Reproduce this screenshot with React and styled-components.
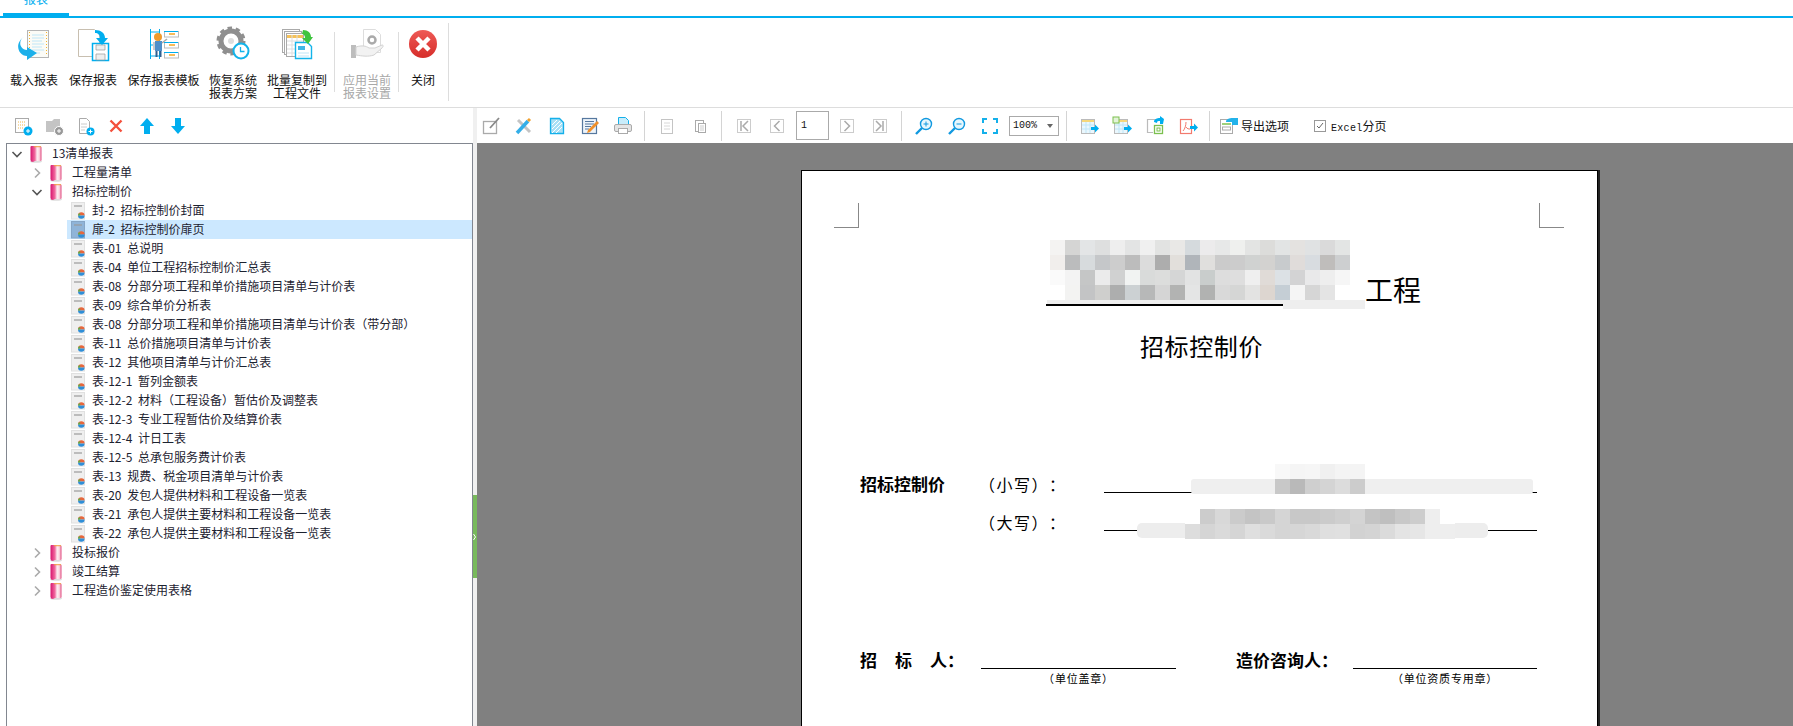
import React from "react";
import styled, { createGlobalStyle } from "styled-components";

const CJK = `"Noto Sans CJK SC", "Noto Sans", sans-serif`;
const BLUE = "#00aeef";

const GlobalStyle = createGlobalStyle`
  html, body { margin: 0; padding: 0; height: 100%; overflow: hidden; background: #fff; }
  #root { height: 100%; }
`;

const Shell = styled.div`
  display: flex;
  flex-direction: column;
  height: 726px;
  overflow: hidden;
  font-family: ${CJK};
  font-size: 12px;
  color: #111;
  background: #fff;
`;

const TabStrip = styled.div`
  height: 16px;
  border-bottom: 2px solid ${BLUE};
  padding-left: 3px;
  overflow: hidden;
`;

const Tab = styled.div`
  width: 66px;
  height: 13px;
  border-bottom: 3px solid ${BLUE};
  text-align: center;
  color: ${BLUE};
  line-height: 12px;
  overflow: hidden;
  span { display: block; margin-top: -7px; }
`;

const Ribbon = styled.div`
  display: flex;
  height: 89px;
  padding-left: 10px;
  border-bottom: 1px solid #ddd;
  box-sizing: content-box;
`;

const RibbonButton = styled.div`
  display: flex;
  flex-direction: column;
  align-items: center;
  width: ${(p) => p.$w}px;
  margin-right: ${(p) => p.$gap ?? 11}px;
  padding-top: 8px;
  color: ${(p) => (p.$disabled ? "#a8a8a8" : "#111")};
`;

const RibbonLabel = styled.div`
  margin-top: 11px;
  line-height: 13px;
  text-align: center;
  white-space: nowrap;
`;

const RibbonSep = styled.div`
  width: 1px;
  height: ${(p) => p.$h}px;
  margin: ${(p) => p.$top}px ${(p) => p.$right}px 0 0;
  background: #ddd;
`;

const Body = styled.div`
  flex: 1;
  display: flex;
  min-height: 0;
`;

const LeftPanel = styled.div`
  width: 473px;
  display: flex;
  flex-direction: column;
`;

const MiniBar = styled.div`
  display: flex;
  align-items: center;
  gap: 11px;
  height: 35px;
  padding-left: 13px;
`;

const TreeBox = styled.div`
  flex: 1;
  margin-left: 6px;
  border: 1px solid #828790;
  border-bottom: 0;
  color: #1c2230;
`;

const Row = styled.div`
  display: flex;
  align-items: center;
  height: 19px;
  margin-left: ${(p) => (p.$leaf ? 60 : 0)}px;
  padding-left: ${(p) => (p.$leaf ? 4 : 4 + p.$level * 20)}px;
  background: ${(p) => (p.$selected ? "#cce8ff" : "transparent")};
  white-space: pre;
  line-height: 19px;
`;

const RowLabel = styled.span`
  margin-top: -2px;
  word-spacing: 3px;
`;

const Twisty = styled.svg`
  width: 12px;
  height: 12px;
  margin-right: 6px;
  flex: none;
`;

const NodeIcon = styled.svg`
  flex: none;
  width: 14px;
  height: 18px;
  margin-right: ${(p) => p.$gap}px;
`;

const Splitter = styled.div`
  width: 4px;
  flex: none;
  background: #f0f0f0;
`;

const SplitHandle = styled.div`
  display: flex;
  align-items: center;
  justify-content: center;
  margin-top: 387px;
  height: 83px;
  background: #78b95c;
`;

const RightPanel = styled.div`
  flex: 1;
  display: flex;
  flex-direction: column;
  min-width: 0;
`;

const ToolBar = styled.div`
  display: flex;
  align-items: center;
  height: 35px;
  padding-left: 4px;
`;

const ToolGroup = styled.div`
  display: flex;
  align-items: center;
  gap: 13px;
`;

const ToolIcon = styled.svg`
  width: 20px;
  height: 20px;
  flex: none;
`;

const ToolSep = styled.div`
  width: 1px;
  height: 30px;
  margin: 0 ${(p) => p.$right ?? 11}px 0 ${(p) => p.$left ?? 11}px;
  background: #d4d4d4;
`;

const PageField = styled.div`
  width: 33px;
  height: 29px;
  margin: 0 8px 0 9px;
  padding-left: 4px;
  box-sizing: border-box;
  border: 1px solid #aaa;
  font: 10px/27px "Liberation Mono", monospace;
`;

const ZoomSelect = styled.div`
  display: flex;
  align-items: center;
  justify-content: space-between;
  width: 50px;
  height: 20px;
  margin-left: 9px;
  padding: 0 5px 0 3px;
  box-sizing: border-box;
  border: 1px solid #aaa;
  font: 10px/18px "Liberation Mono", monospace;
  &::after {
    content: "";
    border: 3px solid transparent;
    border-top: 4px solid #666;
    border-bottom: 0;
  }
`;

const ExportOption = styled.div`
  display: flex;
  align-items: center;
  gap: 3px;
  margin-right: 25px;
`;

const CheckOption = styled.div`
  display: flex;
  align-items: center;
  gap: 5px;
  span { font: 10px "Liberation Mono", monospace; letter-spacing: .3px; }
`;

const CheckBox = styled.div`
  display: flex;
  align-items: center;
  justify-content: center;
  width: 10px;
  height: 10px;
  border: 1px solid #999;
`;

const Viewer = styled.div`
  flex: 1;
  min-height: 0;
  padding: 27px 0 0 324px;
  background: #808080;
  overflow: hidden;
`;

const Page = styled.div`
  width: 795px;
  height: 700px;
  background: #fff;
  border: 1px solid #000;
  border-bottom: 0;
  box-shadow: 2px 0 0 #222;
  color: #000;
  text-spacing-trim: space-all;
`;

const CropMarks = styled.div`
  display: flex;
  justify-content: space-between;
  margin: 32px 33px 0 32px;
`;

const CropMark = styled.div`
  width: 24px;
  height: 24px;
  border-bottom: 1px solid #888;
  ${(p) => (p.$right ? "border-left: 1px solid #888;" : "border-right: 1px solid #888;")}
`;

const TitleRow = styled.div`
  position: relative;
  display: flex;
  align-items: flex-end;
  height: 66px;
  margin: 12px 0 0 244px;
`;

const TitleLine = styled.div`
  width: 237px;
  height: 2px;
  background: #000;
`;

const TitleText = styled.div`
  margin: 0 0 -1px 82px;
  font-size: 28px;
  line-height: 36px;
`;

const Heading = styled.div`
  margin: 23px 0 0 338px;
  font-size: 24px;
  letter-spacing: .6px;
  line-height: 34px;
`;

const FormRow = styled.div`
  display: flex;
  align-items: flex-start;
  height: 38px;
  margin-left: 58px;
  margin-top: ${(p) => p.$top ?? 0}px;
  font-size: 16px;
  line-height: 38px;
`;

const FieldLabel = styled.div`
  width: ${(p) => p.$w}px;
  flex: none;
  font-weight: ${(p) => (p.$bold ? 700 : 400)};
  font-size: ${(p) => (p.$bold ? 17 : 16)}px;
  letter-spacing: ${(p) => (p.$bold ? 0 : 1.5)}px;
  white-space: nowrap;
  span { letter-spacing: 18px; }
`;

const Blank = styled.div`
  position: relative;
  width: ${(p) => p.$w}px;
  flex: none;
  height: 27px;
  border-bottom: 1px solid #000;
  margin-right: ${(p) => p.$gap ?? 0}px;
`;

const Caption = styled.div`
  position: absolute;
  top: 28px;
  left: 0;
  right: 0;
  text-align: center;
  font-size: 11px;
  letter-spacing: .8px;
  line-height: 18px;
`;

const Mosaic = styled.div`
  position: absolute;
  left: ${(p) => p.$x}px;
  top: ${(p) => p.$y}px;
  display: grid;
  grid-template-columns: repeat(${(p) => p.$cols}, 15px);
  grid-auto-rows: 15px;
`;

const Smudge = styled.div`
  position: absolute;
  left: ${(p) => p.$x}px;
  top: ${(p) => p.$y}px;
  width: ${(p) => p.$w}px;
  height: ${(p) => p.$h}px;
  background: ${(p) => p.$c ?? "#eeeeee"};
  border-radius: ${(p) => p.$r ?? 0}px;
`;

const Cell = styled.div`
  background: #${(p) => p.$c};
`;

const titleCells = (
  "f4f3f2 d5d5d4 e3e5e6 dedfdf eeeeee e3e4e4 f0f0f0 e2e3e2 e9e8e6 d5dadd ecebec e7e8e8 eff0ee e3e4e3 dcdcda e2e4e4 e4e2e0 e0e2e3 dadada e3e5e4 " +
  "f1eeec bbbcbd d7dbdd c5c7c9 cdcdcd bcbcbc dcdcdc adadad e2dfdb b0b5ba e0dfdd cbcbcb cccccc d0d2d1 d3d2d0 c8cbcd e0dcda d8dce0 bfbdbb cdcfd0 " +
  "fafafa f3f3f3 c5c6c6 ebebeb d0d1d1 f1f3f2 d9dbda dcdddc d5d6d6 e2e3e3 c9cdcc dddddd dedede efefef e0dbd7 dce1e5 d3d3d4 e9e9ea eeeeee f6f6f6 " +
  "ffffff f3f3f2 c3c4c5 cfcfcd adaeae ccd1d3 b7b8b8 d5d5d5 b2b3b2 e4e5e5 b1b2b1 d9d9d9 d5d6d5 e3e3e2 ddd6d0 c5ced5 f5f5f5 d6d6d6 e4e4e4 ffffff"
).split(" ");
const smallCells = "f8f8f8 f5f5f5 f6f6f6 f0f0f0 f4f4f4 f4f4f4 c8c8c8 b9b9b9 cfcfcf d4d4d4 dcdcdc cccccc".split(" ");
const bigCells = (
  "ffffff cccccc d8d8d8 cbcbcb c4c4c4 c9c9c9 d5d5d5 c8c8c8 c8c8c8 cbcbcb cfcfcf d4d4d4 c4c4c4 bfbfbf c8c8c8 cdcdcd eeeeee ffffff " +
  "dddddd d5d5d5 dadada d5d5d5 dfdfdf dadada d5d5d5 d6d6d6 d9d9d9 dfdfdf e0e0e0 d2d2d2 d4d4d4 dbdbdb e4e4e4 e6e6e6 eeeeee eeeeee"
).split(" ");

const Pixels = ({ cells, cols, x, y }) => (
  <Mosaic $cols={cols} $x={x} $y={y}>
    {cells.map((c, i) => (
      <Cell key={i} $c={c} />
    ))}
  </Mosaic>
);

// ribbon icons, 36 x 36
const RibbonIcon = ({ children }) => (
  <svg width="36" height="36" viewBox="0 0 36 36" style={{ flex: "none" }}>
    {children}
  </svg>
);

const LoadIcon = () => (
  <RibbonIcon>
    <rect x="11.5" y="4.5" width="21" height="27" fill="#fbfbf6" stroke="#b5b5b5" />
    <path d="M13.5 6v24M30.5 6v24" stroke="#f5b32c" strokeDasharray="1 2" />
    <path d="M16 9h12M16 12h12M16 15h10M16 18h12M16 21h10M16 24h12M16 27h8" stroke="#bfe6f7" />
    <path d="M8 11C3 13 2 23 11 24v-3l10 6-10 7v-4C2 30-2 17 8 11z" fill="#1cb0ea" />
  </RibbonIcon>
);
const SaveIcon = () => (
  <RibbonIcon>
    <path d="M3.5 3.5h16l5 5v22h-21z" fill="#fff" stroke="#c8bfb0" />
    <rect x="17.5" y="17.5" width="16" height="17" fill="#fff" stroke={BLUE} strokeWidth="1.5" />
    <path d="M21 19h9v5h-9zM21 28h9v6h-9z" fill="#eee" stroke="#999" strokeWidth=".7" />
    <path d="M20 4c6 0 10 3 10 8h3l-6 7-6-7h4c0-3-2-5-5-5z" fill={BLUE} />
  </RibbonIcon>
);
const TemplateIcon = () => (
  <RibbonIcon>
    <path d="M4.5 3v30M13.5 3v30M4 6h10M4 19h10M4 30h10" stroke={BLUE} />
    <g fill="#fff" stroke="#bbb">
      <rect x="18.5" y="5.5" width="14" height="5.5" />
      <rect x="18.5" y="16.5" width="14" height="5.5" />
      <rect x="18.5" y="26.5" width="14" height="5.5" />
    </g>
    <path d="M18 5.5h14M18 16.5h14M18 26.5h14" stroke={BLUE} />
    <path d="M23 8h6M23 19h6M23 29h6" stroke="#f5a623" strokeWidth="1.4" />
    <circle cx="12" cy="11" r="4" fill="#f09a2c" />
    <rect x="9" y="15" width="7" height="10" fill="#4f8fc9" />
    <path d="M16 17l5-4" stroke="#aaa" strokeWidth="1.6" />
    <rect x="7" y="16" width="2" height="8" fill="#ccc" />
    <path d="M10.5 25v6M14.5 25v6" stroke="#2f5f8f" strokeWidth="2" />
  </RibbonIcon>
);
const RestoreIcon = () => (
  <RibbonIcon>
    <circle cx="16" cy="15" r="10" fill="none" stroke="#8f8f8f" strokeWidth="5" />
    <circle cx="16" cy="15" r="13" fill="none" stroke="#8f8f8f" strokeWidth="3" strokeDasharray="4.5 3.7" />
    <circle cx="16" cy="15" r="3" fill="#ddd" />
    <circle cx="26" cy="25" r="7.5" fill="#fff" stroke="#14b4ea" strokeWidth="2" />
    <path d="M25.5 21v4.5h4" fill="none" stroke="#14b4ea" strokeWidth="1.3" />
  </RibbonIcon>
);
const BatchIcon = () => (
  <RibbonIcon>
    <rect x="3.5" y="3.5" width="17" height="23" fill="#fff" stroke="#aaa" />
    <rect x="5.5" y="5.5" width="17" height="23" fill="#fff" stroke="#aaa" />
    <rect x="7.5" y="7.5" width="17" height="23" fill="#fff" stroke="#aaa" />
    <path d="M8 9h16v3H8z" fill="#f5c25a" />
    <path d="M8 15h16M8 19h16M8 23h16M8 27h16M13 9v21M18 9v21" stroke="#ddd" />
    <path d="M16.5 16.5h12l4 4v12h-16z" fill="#fff" stroke="#14b4ea" strokeWidth="1.4" />
    <path d="M19 20h7v4h-7z" fill="#3fb6e6" />
    <path d="M19 27h11M19 30h11" stroke="#bfe6f7" />
    <path d="M24 4c5 0 8 3 8 7h2l-5 7-6-6h3c0-2-1-4-3-4z" fill="#3ec43e" />
  </RibbonIcon>
);
const ApplyIcon = () => (
  <RibbonIcon>
    <path d="M14.5 3.5h12l5 5v18h-17z" fill="#fff" stroke="#ddd" />
    <circle cx="23" cy="14" r="3.5" fill="none" stroke="#aaa" strokeWidth="2.5" />
    <rect x="2" y="19" width="5" height="13" fill="#bdbdbd" />
    <path d="M7 21c6-2 10-1 13 1h6l7-3c2 0 1 2 0 3l-8 7c-6 2-12 1-18 0z" fill="#f2f2f2" stroke="#d2d2d2" />
  </RibbonIcon>
);
const CloseIcon = () => (
  <RibbonIcon>
    <defs>
      <linearGradient id="closeRed" x1="0" y1="0" x2="0" y2="1">
        <stop offset="0" stopColor="#ee5a56" />
        <stop offset="1" stopColor="#d62d2a" />
      </linearGradient>
    </defs>
    <circle cx="18" cy="18" r="14" fill="url(#closeRed)" />
    <path d="M12 12l12 12M24 12L12 24" stroke="#fff" strokeWidth="4.5" />
  </RibbonIcon>
);

const Tool = ({ children }) => <ToolIcon viewBox="0 0 20 20">{children}</ToolIcon>;

const NavButton = ({ d }) => (
  <Tool>
    <rect x="3.5" y="3.5" width="13" height="13" fill="#fff" stroke="#ccc" />
    <path d={d} fill="none" stroke="#aaa" strokeWidth="1.5" />
  </Tool>
);

const Magnifier = ({ plus }) => (
  <Tool>
    <circle cx="12" cy="8" r="5.5" fill="#e8f7fd" stroke="#1199e0" strokeWidth="1.4" />
    <path d="M8 12l-6 6" stroke="#1199e0" strokeWidth="2.4" />
    <path d={plus ? "M9.5 8h5M12 5.5v5" : "M9.5 8h5"} stroke="#1199e0" />
  </Tool>
);

const TableArrow = ({ badge }) => (
  <Tool>
    <rect x="2.5" y="3.5" width="13" height="14" fill="#eaf7fd" stroke="#bbb" />
    <path d="M3 4h12v2H3z" fill="#f5d77a" />
    <path d="M3 9h12M3 13h12M7 6v11M11 6v11" stroke="#bfe6f7" />
    {badge && <rect x="1" y="1" width="6" height="6" fill="#e2f3d8" stroke="#7cc04f" />}
    <path d="M12 11h4V8.5l4 4-4 4V14h-4z" fill={BLUE} />
  </Tool>
);

const folders = [
  { label: "工程量清单" },
  { label: "招标控制价", open: true },
];

const leaves = [
  "封-2 招标控制价封面",
  "扉-2 招标控制价扉页",
  "表-01 总说明",
  "表-04 单位工程招标控制价汇总表",
  "表-08 分部分项工程和单价措施项目清单与计价表",
  "表-09 综合单价分析表",
  "表-08 分部分项工程和单价措施项目清单与计价表（带分部）",
  "表-11 总价措施项目清单与计价表",
  "表-12 其他项目清单与计价汇总表",
  "表-12-1 暂列金额表",
  "表-12-2 材料（工程设备）暂估价及调整表",
  "表-12-3 专业工程暂估价及结算价表",
  "表-12-4 计日工表",
  "表-12-5 总承包服务费计价表",
  "表-13 规费、税金项目清单与计价表",
  "表-20 发包人提供材料和工程设备一览表",
  "表-21 承包人提供主要材料和工程设备一览表",
  "表-22 承包人提供主要材料和工程设备一览表",
];

const Chevron = ({ open }) => (
  <Twisty viewBox="0 0 12 12">
    {open ? (
      <path d="M1.5 4L6 8.5 10.500 4" fill="none" stroke="#555" strokeWidth="1.6" />
    ) : (
      <path d="M4 1.500L8.500 6 4 10.500" fill="none" stroke="#aaa" strokeWidth="1.6" />
    )}
  </Twisty>
);

const BookIcon = () => (
  <NodeIcon viewBox="0 0 14 18" $gap={9}>
    <defs>
      <linearGradient id="bookFace" x1="0" y1="0" x2="1" y2="0">
        <stop offset="0" stopColor="#d8146e" />
        <stop offset=".4" stopColor="#f06a9e" />
        <stop offset=".6" stopColor="#fdeef2" />
        <stop offset=".8" stopColor="#fbd5df" />
        <stop offset="1" stopColor="#e04a80" />
      </linearGradient>
    </defs>
    <ellipse cx="7" cy="16.500" rx="6" ry="1.300" fill="#ddd" />
    <path d="M1.500 2q0-1 1-1h8.500q1.500 0 1.500 1.500V15q0 1-1 1H6l-2 1q-2.500 0-2.500-2z" fill="url(#bookFace)" />
    <path d="M5 1.200h7v1H5z" fill="#f0a040" />
  </NodeIcon>
);

const SheetIcon = ({ selected }) => (
  <NodeIcon viewBox="0 0 14 18" $gap={7}>
    <rect x=".5" y=".5" width="13" height="16.500" fill={selected ? "#8fb4d8" : "#efefef"} stroke={selected ? "#86a6c6" : "#e0e0e0"} />
    <path d="M3 4h8" stroke="#999" strokeWidth="1.200" />
    <path d="M7 13.500a3.300 3.300 0 0 1 6.600 0z" fill="#e8663c" />
    <path d="M7 13.500h6.600a3.300 3.300 0 0 1-6.600 0z" fill="#2f8fd8" />
    <path d="M7 13.500a2.200 2.200 0 0 1 2.200-2.200v2.200z" fill="#58b24c" />
  </NodeIcon>
);

const Folder = ({ level, label, open }) => (
  <Row $level={level}>
    <Chevron open={open} />
    <BookIcon />
    <RowLabel>{label}</RowLabel>
  </Row>
);

const App = () => (
  <Shell>
    <GlobalStyle />
    <TabStrip>
      <Tab>
        <span>报表</span>
      </Tab>
    </TabStrip>

    <Ribbon>
      <RibbonButton $w={48} $gap={12}>
        <LoadIcon />
        <RibbonLabel>载入报表</RibbonLabel>
      </RibbonButton>
      <RibbonButton $w={46} $gap={12}>
        <SaveIcon />
        <RibbonLabel>保存报表</RibbonLabel>
      </RibbonButton>
      <RibbonButton $w={71} $gap={10}>
        <TemplateIcon />
        <RibbonLabel>保存报表模板</RibbonLabel>
      </RibbonButton>
      <RibbonButton $w={48} $gap={10}>
        <RestoreIcon />
        <RibbonLabel>
          恢复系统
          <br />
          报表方案
        </RibbonLabel>
      </RibbonButton>
      <RibbonButton $w={60} $gap={7}>
        <BatchIcon />
        <RibbonLabel>
          批量复制到
          <br />
          工程文件
        </RibbonLabel>
      </RibbonButton>
      <RibbonSep $top={14} $h={60} $right={8} />
      <RibbonButton $w={48} $gap={7} $disabled>
        <ApplyIcon />
        <RibbonLabel>
          应用当前
          <br />
          报表设置
        </RibbonLabel>
      </RibbonButton>
      <RibbonSep $top={14} $h={60} $right={12} />
      <RibbonButton $w={24} $gap={13}>
        <CloseIcon />
        <RibbonLabel>关闭</RibbonLabel>
      </RibbonButton>
      <RibbonSep $top={5} $h={78} $right={0} />
    </Ribbon>

    <Body>
      <LeftPanel>
        <MiniBar>
          <Tool>
            <rect x="2.500" y="2.500" width="13" height="14" fill="#fff" stroke="#aaa" />
            <path d="M5 6h8M5 9h8M5 12h6" stroke="#f2b84a" strokeDasharray="1 1" />
            <circle cx="15" cy="15" r="4.500" fill={BLUE} />
            <path d="M13 15h4M15 13v4" stroke="#fff" />
          </Tool>
          <Tool>
            <path d="M2 5h6l2-2h6v13H2z" fill="#c4c4c4" />
            <circle cx="15" cy="15" r="4.500" fill="#999" stroke="#fff" />
            <path d="M13 15h4M15 13v4" stroke="#fff" />
          </Tool>
          <Tool>
            <path d="M4.500 2.500h7l3 3v12h-10z" fill="#fff" stroke="#aaa" />
            <path d="M6 8h6M6 11h6M6 14h4" stroke="#ccc" />
            <circle cx="15.500" cy="15.500" r="4" fill={BLUE} />
            <path d="M13.500 15.500h4M15.500 13.500v4" stroke="#fff" />
          </Tool>
          <Tool>
            <path d="M4.500 4.500l11 11M15.500 4.500l-11 11" stroke="#f4503c" strokeWidth="2.400" />
          </Tool>
          <Tool>
            <path d="M10 2l7 8h-4v8H7v-8H3z" fill={BLUE} />
          </Tool>
          <Tool>
            <path d="M10 18l7-8h-4V2H7v8H3z" fill={BLUE} />
          </Tool>
        </MiniBar>
        <TreeBox>
          <Folder level={0} label="13清单报表" open />
          {folders.map((f) => (
            <Folder key={f.label} level={1} label={f.label} open={f.open} />
          ))}
          {leaves.map((text, i) => (
            <Row key={i} $leaf $selected={i === 1}>
              <SheetIcon selected={i === 1} />
              <RowLabel>{text}</RowLabel>
            </Row>
          ))}
          <Folder level={1} label="投标报价" />
          <Folder level={1} label="竣工结算" />
          <Folder level={1} label="工程造价鉴定使用表格" />
        </TreeBox>
      </LeftPanel>

      <Splitter>
        <SplitHandle>
          <svg width="4" height="8" viewBox="0 0 4 8">
            <path d="M.5 1l2 3-2 3" fill="none" stroke="#fff" />
          </svg>
        </SplitHandle>
      </Splitter>

      <RightPanel>
        <ToolBar>
          <ToolGroup>
            <Tool>
              <rect x="2.500" y="5.500" width="13" height="12" fill="#fff" stroke="#aaa" strokeWidth="1.300" />
              <path d="M9 12l9-10" stroke="#888" strokeWidth="1.800" />
            </Tool>
            <Tool>
              <path d="M4 4l12 12" stroke="#c4c4c4" strokeWidth="3" />
              <path d="M3 17l11-12" stroke="#33aee8" strokeWidth="3.500" />
              <path d="M14 5l2-2" stroke="#f0a030" strokeWidth="3" />
            </Tool>
            <Tool>
              <path d="M3.500 2.500h9l4 4v11h-13z" fill="#a8e0f6" stroke="#14b0ea" strokeWidth="1.300" />
              <path d="M5 9l5-5M5 13l8-8M5 17l10-10M9 17l6-6" stroke="#fff" />
            </Tool>
            <Tool>
              <rect x="2.500" y="2.500" width="14" height="15" fill="#eef4fa" stroke="#56789f" strokeWidth="1.200" />
              <path d="M5 5.500h9M5 8h9M5 10.500h6M5 13h4" stroke="#56789f" />
              <path d="M7 17l1-3 9-9 2 2-9 9z" fill="#f0902a" />
            </Tool>
            <Tool>
              <path d="M5.500 1.500h7l3 3V10h-10z" fill="#c8ecfa" stroke="#14b0ea" />
              <rect x="1.500" y="8.500" width="17" height="7" rx="1.500" fill="#e4e4e4" stroke="#aaa" />
              <rect x="5.500" y="12.500" width="9" height="5" fill="#fff" stroke="#aaa" />
            </Tool>
          </ToolGroup>
          <ToolSep $right={12} />
          <ToolGroup>
            <Tool>
              <rect x="4.500" y="3.500" width="11" height="14" fill="#fff" stroke="#c4c4c4" />
              <path d="M7 7h6M7 10h6M7 13h6" stroke="#d8d8d8" />
            </Tool>
            <Tool>
              <rect x="5.500" y="4.500" width="8" height="11" fill="#fff" stroke="#aaa" />
              <rect x="8.500" y="7.500" width="7" height="9" fill="#fff" stroke="#aaa" />
              <path d="M10 10h4M10 12h4M10 14h4" stroke="#ccc" />
            </Tool>
          </ToolGroup>
          <ToolSep $right={12} />
          <ToolGroup>
            <NavButton d="M7 5v10M14 5l-5 5 5 5" />
            <NavButton d="M12.500 5l-5 5 5 5" />
          </ToolGroup>
          <PageField>1</PageField>
          <ToolGroup>
            <NavButton d="M7.500 5l5 5-5 5" />
            <NavButton d="M13 5v10M6 5l5 5-5 5" />
          </ToolGroup>
          <ToolSep $right={12} />
          <ToolGroup>
            <Magnifier plus />
            <Magnifier />
            <Tool>
              <path d="M3 7V3h4M13 3h4v4M17 13v4h-4M7 17H3v-4" fill="none" stroke="#14b0ea" strokeWidth="2" />
            </Tool>
          </ToolGroup>
          <ZoomSelect>100%</ZoomSelect>
          <ToolSep $left={7} $right={12} />
          <ToolGroup>
            <TableArrow />
            <TableArrow badge />
            <Tool>
              <path d="M13 3.500H2.500v13H8" fill="none" stroke="#bbb" strokeWidth="1.200" />
              <path d="M9 6c0-3 3-4 6-4V0l4 3-1 5h-3V5c-2 0-3 0-3 2z" fill={BLUE} />
              <rect x="9.500" y="9.500" width="8" height="8" fill="#fff" stroke="#7cc04f" strokeWidth="1.300" />
              <rect x="12" y="12" width="3" height="3" fill="none" stroke="#7cc04f" />
            </Tool>
            <Tool>
              <rect x="2.500" y="3.500" width="11" height="14" fill="#fff" stroke="#f27a6e" strokeWidth="1.200" />
              <path d="M5 15c2-2 3-6 3-9M8 11c1 2 3 2 4 2" fill="none" stroke="#f27a6e" />
              <path d="M12 10h4V7.500l4 4-4 4V13h-4z" fill={BLUE} />
            </Tool>
          </ToolGroup>
          <ToolSep $right={10} />
          <ExportOption>
            <svg width="18" height="18" viewBox="0 0 18 18">
              <rect x=".5" y="2.500" width="12" height="14" fill="#fff" stroke="#aaa" />
              <path d="M2 7h9" stroke="#7cc04f" strokeWidth="1.500" />
              <rect x="2.500" y="10" width="8" height="3" fill="#fff" stroke="#aaa" />
              <path d="M6 5c0-3 3-4 7-4l2 0 3 0v7h-6V5z" fill="#22b2ea" />
            </svg>
            导出选项
          </ExportOption>
          <CheckOption>
            <CheckBox>
              <svg width="8" height="8" viewBox="0 0 8 8">
                <path d="M1 4l2 2 4-5" fill="none" stroke="#666" />
              </svg>
            </CheckBox>
            <div>
              <span>Excel</span>分页
            </div>
          </CheckOption>
        </ToolBar>

        <Viewer>
          <Page>
            <CropMarks>
              <CropMark />
              <CropMark $right />
            </CropMarks>
            <TitleRow>
              <TitleLine />
              <TitleText>工程</TitleText>
              <Pixels cells={titleCells} cols={20} x={4} y={0} />
              <Smudge $x={1} $y={60} $w={236} $h={4} />
              <Smudge $x={237} $y={60} $w={82} $h={9} />
              <Smudge $x={304} $y={30} $w={15} $h={30} $c="#ffffff" />
            </TitleRow>
            <Heading>招标控制价</Heading>

            <FormRow $top={102}>
              <FieldLabel $w={119} $bold>
                招标控制价
              </FieldLabel>
              <FieldLabel $w={125}>（小写）：</FieldLabel>
              <Blank $w={433}>
                <Smudge $x={87} $y={14} $w={342} $h={15} $r={3} $c="#efefef" />
                <Pixels cells={smallCells} cols={6} x={171} y={-1} />
              </Blank>
            </FormRow>
            <FormRow>
              <FieldLabel $w={119} />
              <FieldLabel $w={125}>（大写）：</FieldLabel>
              <Blank $w={433}>
                <Smudge $x={33} $y={20} $w={351} $h={15} $r={5} $c="#ededed" />
                <Pixels cells={bigCells} cols={18} x={81} y={6} />
              </Blank>
            </FormRow>

            <FormRow $top={100}>
              <FieldLabel $w={121} $bold>
                <span>招标</span>人：
              </FieldLabel>
              <Blank $w={195} $gap={60}>
                <Caption>（单位盖章）</Caption>
              </Blank>
              <FieldLabel $w={117} $bold>
                造价咨询人：
              </FieldLabel>
              <Blank $w={184}>
                <Caption>（单位资质专用章）</Caption>
              </Blank>
            </FormRow>
          </Page>
        </Viewer>
      </RightPanel>
    </Body>
  </Shell>
);

export default App;
